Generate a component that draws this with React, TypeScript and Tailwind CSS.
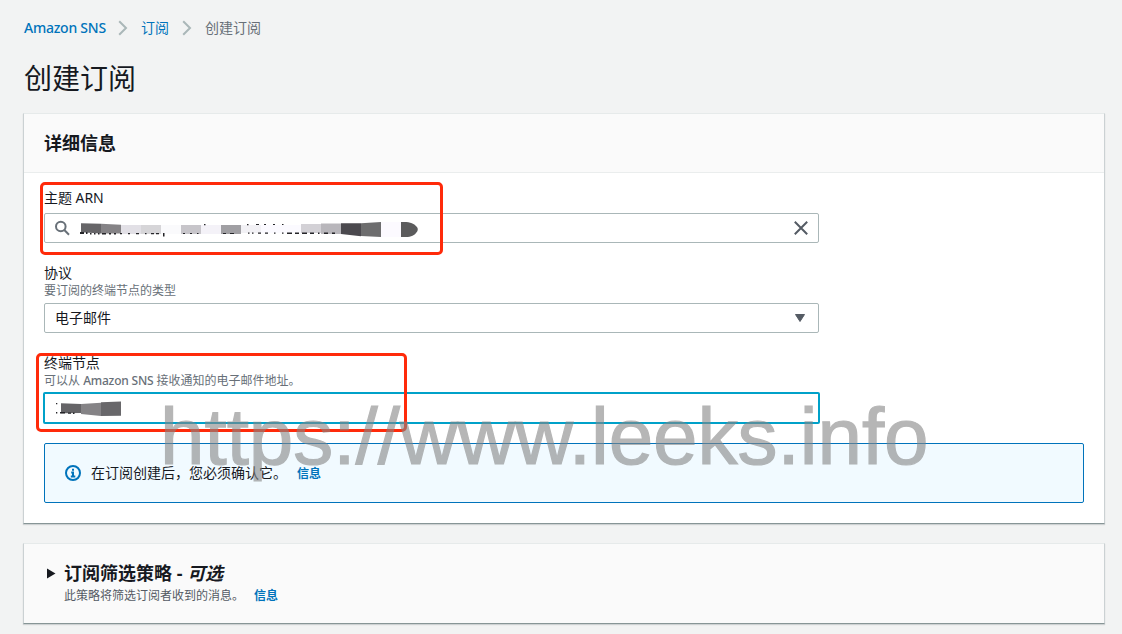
import React from "react";

function Chevron() {
  return (
    <svg className="h-4 w-[10px] shrink-0" viewBox="0 0 10 16" fill="none" stroke="#aab7b8" strokeWidth="2">
      <path d="M1.2 1.2 8 8l-6.8 6.8" />
    </svg>
  );
}

function Field({ label, hint, children }: { label: string; hint?: React.ReactNode; children: React.ReactNode }) {
  return (
    <div>
      <div className="h-5 text-[14px] leading-5 tracking-[-0.05px] text-[#16191f]">{label}</div>
      {hint && <div className="h-4 text-[12px] leading-4 text-[#687078]">{hint}</div>}
      {children}
    </div>
  );
}

function ArnMask() {
  return (
    <svg className="absolute left-[29px] top-0 h-[28px] w-[350px]" viewBox="74 214 350 28">
      <path fill="#fff" d="M74 220h230v3l37-1v16h-37l-4-3.8H74z" />
      <path fill="#666568" d="M81 223.2l20 .6v9.8l-20-1.4z" />
      <path fill="#858386" d="M101 223.8l20 1v8.800h-20z" />
      <path fill="#e2e0e6" d="M121 225h20v9h-20z" />
      <path fill="#d6d5d8" d="M141 225h20v9h-20z" />
      <path fill="#fafafc" d="M161 225h20v9h-20z" />
      <path fill="#c7c5ca" d="M181 225h20v9h-20z" />
      <path fill="#f4f2f8" d="M201 225h20v9h-20z" />
      <path fill="#a09fa3" d="M221 225h20v9h-20z" />
      <path fill="#f2f1f5" d="M241 225h20v8h-20z" />
      <path fill="#fbfaff" d="M261 225h40v8h-40z" />
      <path fill="#d3d1d6" d="M301 224h20v9h-20z" />
      <path fill="#b8b6bb" d="M321 223.5h20V234h-20z" />
      <path fill="#4b494e" d="M341 223.3h20v13l-20-2.300z" />
      <path fill="#6d6d6e" d="M361 223.3l20-1.300v15l-20-1z" />
      <path fill="#fcfaff" d="M381 222h20v15h-20z" />
      <path fill="#5b5b5c" d="M401 222c8-.6 13 1 16 5q2 3-1 6c-3 4-8 4.200-15 4z" />
      <g fill="#252529">
        <path d="M80 232h4v2h-4zM86 232h1.500v2H86zM90 233h1.500v1.500H90zM94 233h1.500v1.500H94zM98 233h1.500v1.500H98zM102 233h4v1.500h-4zM109 233h2v1.500h-2zM114 233h2v1.500h-2zM120 233h2v1.200h-2zM128 233h2v1.200h-2zM136 233h3v1.200h-3zM145 233h1.500v1.200H145zM151 233h3v1.200h-3zM156 233h3v1.200h-3zM163 233h1.500v3.500H163zM183 233h2v1h-2zM190 233h2v1h-2zM197 233h1.500v1H197zM204 224h1.500v1.300H204zM223 233h3v1h-3zM230 233h4v1h-4zM247 224h1.500v1.200H247zM256 224h3v1h-3zM264 224h2v1h-2zM273 224h2v1h-2zM282 224h1.500v1H282zM248 232.500h1.500v1.300H248zM252 232.500h1.500v1.300H252zM258 232.500h3v1.200h-3zM265 232.500h3v1.200h-3zM274 232.500h1.500v1.200H274zM282 232.500h1.500v1.200H282zM287 232.500h5v1.500h-5zM295 232.500h4v1.500h-4zM302 232.500h5v1.500h-5zM310 232.500h4v1.500h-4zM318 232.500h1.500v1.500H318zM324 232.500h4v1.500h-4zM332 232.500h3v1.500h-3z" />
      </g>
    </svg>
  );
}

const panel =
  "border-x border-t border-b border-x-[#cbd1d3] border-t-[#e6eaea] border-b-[#879596] shadow-[0_1px_1px_rgba(0,28,36,0.15)]";

export default function App() {
  return (
    <div className="relative h-[634px] w-[1122px] overflow-hidden bg-[#f2f3f3] pl-[23px] pr-[17px] font-['Noto_Sans','Noto_Sans_CJK_SC',sans-serif] text-[#16191f]">
      <nav className="flex h-[56px] items-center pl-px text-[14px] leading-5">
        <a className="w-[94px] whitespace-nowrap font-medium tracking-[-0.25px] text-[#0073bb]">Amazon SNS</a>
        <Chevron />
        <a className="ml-[13px] w-[41px] text-[#0073bb]">订阅</a>
        <Chevron />
        <span className="ml-[13px] text-[#687078]">创建订阅</span>
      </nav>
      <h1 className="flex h-[57px] items-start pl-px pt-[4px] text-[28px] leading-9">创建订阅</h1>

      <section className={`${panel} h-[411px] bg-white`}>
        <h2 className="flex h-[59px] items-center border-b border-[#eaeded] bg-[#fafafa] pl-5 text-[18px] font-bold">
          详细信息
        </h2>
        <div className="pl-5 pr-5 pt-[15px]">
          <Field label="主题 ARN">
            <div className="relative mt-[5px] flex h-[30px] w-[775px] items-center justify-between rounded-[2px] border border-[#aab7b8] bg-white">
              <svg className="ml-[9px] h-4 w-4" viewBox="0 0 16 16" fill="none" stroke="#687078" strokeWidth="2">
                <circle cx="6.800" cy="6.500" r="4.800" />
                <path d="m10.300 10 4.700 4.700" />
              </svg>
              <ArnMask />
              <svg className="mr-[10px] h-[14px] w-[14px]" viewBox="0 0 14 14" fill="none" stroke="#545b64" strokeWidth="2">
                <path d="m.8.800 12.400 12.400M13.200.800.800 13.200" />
              </svg>
            </div>
          </Field>
          <div className="mt-5">
            <Field label="协议" hint="要订阅的终端节点的类型">
              <div className="mt-[4px] flex h-[30px] w-[775px] items-center justify-between rounded-[2px] border border-[#aab7b8] bg-white pl-[10px] pr-[13px] text-[14px]">
                <span className="pb-[2px]">电子邮件</span>
                <svg className="h-2 w-[10px]" viewBox="0 0 10 8" fill="#545b64" stroke="#545b64" strokeLinejoin="round">
                  <path d="M.5.5h9L5 7.500z" />
                </svg>
              </div>
            </Field>
          </div>
          <div className="mt-5">
            <Field
              label="终端节点"
              hint={
                <>
                  可以从 <span className="font-medium tracking-[-0.2px]">Amazon SNS</span> 接收通知的电子邮件地址。
                </>
              }
            >
              <div className="-ml-px mt-[3px] h-[32px] w-[777px] rounded-[2px] border-2 border-[#00a1c9] bg-white">
                <svg className="ml-[9px] h-7 w-[70px]" viewBox="54 394 70 28">
                  <path fill="#656467" d="M61 403.300l20 .7v9l-20 .2z" />
                  <path fill="#858386" d="M81 404l20-1.300V416l-20-2z" />
                  <path fill="#68676a" d="M101 402.200l20-.7v14.300l-20 .2z" />
                  <path fill="#252529" d="M56 403h1.300v1.200H56zM56 412h1.300v1.500H56zM60 412h5v1.500h-5zM68 412.500h3v1.300h-3zM73 412.500h1.500v1.500H73z" />
                </svg>
              </div>
            </Field>
          </div>
          <div className="mt-[19px] flex h-[60px] items-center rounded-[2px] border border-[#0073bb] bg-[#f1faff] pl-5 text-[14px]">
            <svg className="h-4 w-4" viewBox="0 0 16 16" fill="none" stroke="#0073bb" strokeWidth="2">
              <circle cx="8" cy="8" r="7" />
              <path d="M8 3.700v2M6.200 7.500H8v4M5.800 11.500h4.500" />
            </svg>
            <span className="ml-[10px] pb-px">在订阅创建后，您必须确认它。</span>
            <a className="ml-[10px] pt-[2px] text-[12px] font-bold text-[#0073bb]">信息</a>
          </div>
        </div>
      </section>

      <section className={`${panel} mt-[19px] h-[81px] bg-[#fafafa] pl-[22px] pt-[17px]`}>
        <div className="flex h-[24px] items-center">
          <svg className="h-[11px] w-[10px]" viewBox="0 0 10 11" fill="#16191f">
            <path d="M1 .5 9.500 5.500 1 10.500z" />
          </svg>
          <h2 className="ml-[8px] whitespace-pre text-[18px] font-bold leading-6">
            订阅筛选策略 - <i>可选</i>
          </h2>
        </div>
        <div className="mt-px flex h-5 items-center pl-[18px] text-[12px] leading-5 text-[#545b64]">
          此策略将筛选订阅者收到的消息。
          <a className="ml-[10px] font-bold text-[#0073bb]">信息</a>
        </div>
      </section>

      <div className="absolute left-[40px] top-[182px] h-[73px] w-[403px] rounded-[5px] border-[3px] border-[#ff2a0a]" />
      <div className="absolute left-[36px] top-[353px] h-[79px] w-[371px] rounded-[5px] border-[3px] border-[#ff2a0a]" />
      <div className="pointer-events-none absolute left-[160px] top-[392px] whitespace-nowrap font-['Liberation_Sans',sans-serif] text-[80px] leading-[90px] tracking-[-0.03px] text-[#868686] opacity-60 [-webkit-text-stroke:1.2px_#868686]">
        https://www.leeks.info
      </div>
    </div>
  );
}
